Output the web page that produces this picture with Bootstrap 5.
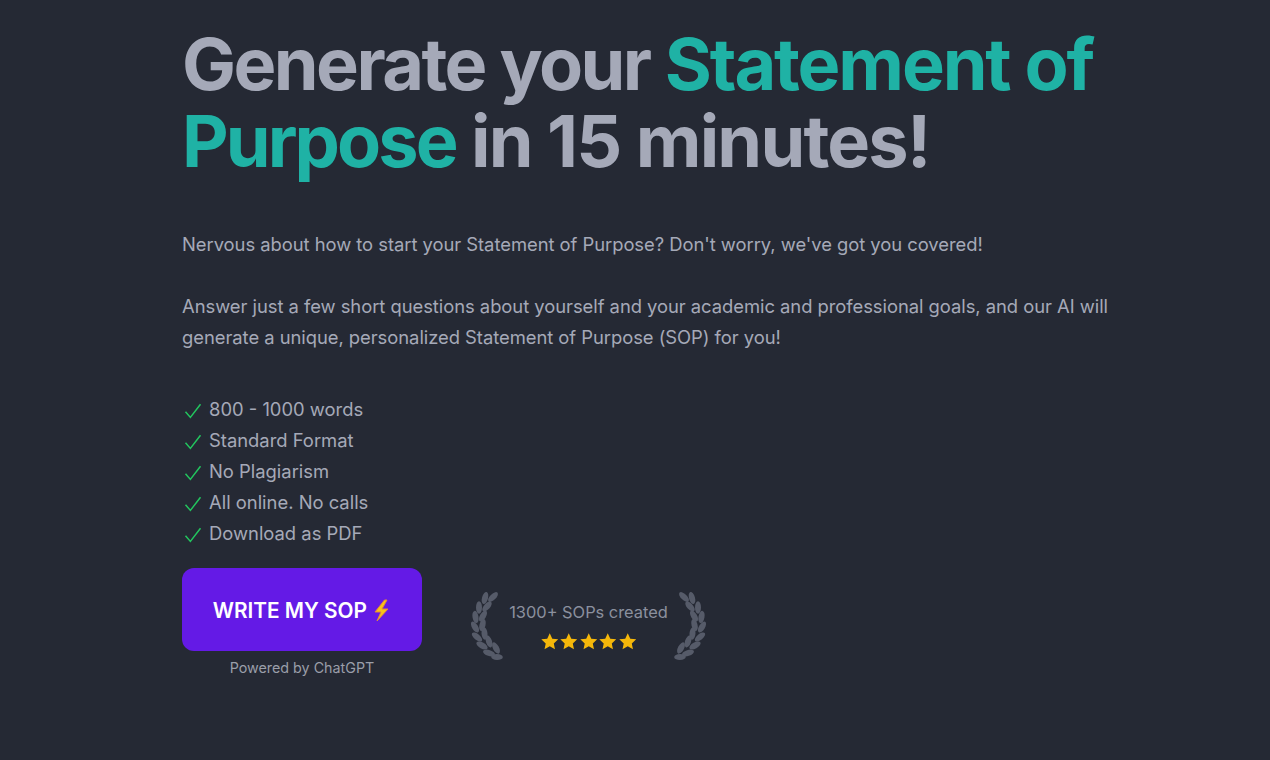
<!DOCTYPE html>
<html lang="en">
<head>
  <meta charset="UTF-8">
  <meta name="viewport" content="width=device-width, initial-scale=1.0">
  <link rel="stylesheet" href="https://cdn.jsdelivr.net/npm/bootstrap@5.3.0/dist/css/bootstrap.min.css">
  <script src="https://cdn.jsdelivr.net/npm/bootstrap@5.3.0/dist/js/bootstrap.bundle.min.js" defer></script>
  <title>Statement of Purpose</title>
  <style>
    body { background: #252934; color: #a5a9b8; font-family: Inter, sans-serif; overflow: hidden; }
    .hero-wrap { width: 960px; margin-left: 182px; padding-top: 25px; }
    .hero-title { font-size: 72px; font-weight: 700; line-height: 77px; letter-spacing: -1.8px; margin-bottom: 50px; color: #a5a9b8; }
    .accent { color: #1fb2a5; }
    .tight-a { letter-spacing: -2.55px; }
    .tight-b { letter-spacing: -2.15px; }
    .tight-c { letter-spacing: -2.9px; }
    .intro { font-size: 18.4px; line-height: 31px; width: 950px; margin: 0 0 31px; letter-spacing: -0.04px; }
    .intro-last { margin-bottom: 41px; }
    .ticks { font-size: 18.4px; line-height: 31px; margin: 0 0 19px; padding: 0; list-style: none; }
    .ticks svg { width: 18px; height: 18px; margin: 0 7px 0 2px; color: #22c55e; }
    .write-btn { width: 240px; height: 83px; background: #641ae6; border: 0; border-radius: 12px; color: #fff; font-size: 20.8px; font-weight: 600; white-space: nowrap; padding: 2px 0 0 0; }
    .write-btn:hover { background: #641ae6; color: #fff; }
    .write-btn svg { width: 19px; height: 23px; vertical-align: -4px; }
    .powered { font-size: 14.3px; line-height: 20px; margin-top: 7px; width: 240px; text-align: center; color: #9a9ea9; }
    .proof { margin-left: 49px; height: 70px; margin-top: 23px; color: #8b909e; }
    .laurel { width: 32px; height: 70px; color: #565b69; flex: none; }
    .flip-x { transform: scaleX(-1); }
    .proof-text { font-size: 16.4px; line-height: 24px; width: 171px; margin-top: -1px; }
    .stars { color: #f5b70a; height: 20px; margin-top: 8px; }
    .stars svg { width: 19.5px; height: 19px; display: block; }
  </style>
</head>
<body>
<svg width="0" height="0" class="d-block">
  <defs>
    <symbol id="laurelLeft" viewBox="0 0 32 70">
      <g fill="currentColor">
        <ellipse cx="22" cy="6" rx="3" ry="6.200" transform="rotate(45 22 6)"/>
        <ellipse cx="14" cy="7" rx="3" ry="6.200" transform="rotate(15 14 7)"/>
        <ellipse cx="16" cy="15.500" rx="3" ry="6.200" transform="rotate(42 16 15.500)"/>
        <ellipse cx="8" cy="16.500" rx="3" ry="6.200"/>
        <ellipse cx="12" cy="25" rx="3" ry="6.200" transform="rotate(30 12 25)"/>
        <ellipse cx="4.500" cy="26" rx="3" ry="6.200" transform="rotate(-10 4.500 26)"/>
        <ellipse cx="11.500" cy="34" rx="3" ry="6.200" transform="rotate(14 11.500 34)"/>
        <ellipse cx="4" cy="36" rx="3" ry="6.200" transform="rotate(-30 4 36)"/>
        <ellipse cx="13.500" cy="42.500" rx="3" ry="6.200" transform="rotate(-5 13.500 42.500)"/>
        <ellipse cx="6" cy="46" rx="3" ry="6.200" transform="rotate(-50 6 46)"/>
        <ellipse cx="18" cy="50.500" rx="3" ry="6.200" transform="rotate(-18 18 50.500)"/>
        <ellipse cx="11" cy="54.500" rx="3" ry="6.200" transform="rotate(-62 11 54.500)"/>
        <ellipse cx="25" cy="57" rx="3" ry="6.200" transform="rotate(-28 25 57)"/>
        <ellipse cx="18" cy="62" rx="3" ry="6.200" transform="rotate(-72 18 62)"/>
        <ellipse cx="26" cy="66" rx="3" ry="5.800" transform="rotate(-88 26 66)"/>
      </g>
    </symbol>
    <symbol id="star" viewBox="0 0 24 24">
      <path fill="currentColor" d="M12 1.500l3.200 6.900 7.500.9-5.600 5.100 1.500 7.500-6.600-3.800-6.600 3.800 1.500-7.500L1.300 9.300l7.500-.9z"/>
    </symbol>
    <symbol id="tick" viewBox="0 0 24 24">
      <path fill="none" stroke="currentColor" stroke-width="2" d="M2 13l6.500 7.500L22 3"/>
    </symbol>
  </defs>
</svg>

<div class="hero-wrap">
  <h1 class="hero-title"><span class="tight-a">Generate your</span> <span class="accent tight-b">Statement of</span> <span class="accent tight-c">Purpose</span> in 15 minutes!</h1>
  <p class="intro">Nervous about how to start your Statement of Purpose? Don't worry, we've got you covered!</p>
  <p class="intro intro-last">Answer just a few short questions about yourself and your academic and professional goals, and our AI will generate a unique, personalized Statement of Purpose (SOP) for you!</p>

  <ul class="ticks">
    <li><svg><use href="#tick"/></svg>800 - 1000 words</li>
    <li><svg><use href="#tick"/></svg>Standard Format</li>
    <li><svg><use href="#tick"/></svg>No Plagiarism</li>
    <li><svg><use href="#tick"/></svg>All online. No calls</li>
    <li><svg><use href="#tick"/></svg>Download as PDF</li>
  </ul>

  <div class="d-flex align-items-start">
    <div>
      <button class="btn write-btn" type="button">WRITE MY SOP
        <svg viewBox="0 0 19 23"><path fill="#f9c21a" stroke="#e08a3c" stroke-width="1" d="M12.500 1L3 13h6L5 22l11-12h-6l5-9z"/></svg>
      </button>
      <div class="powered">Powered by ChatGPT</div>
    </div>
    <div class="proof d-flex align-items-center">
      <svg class="laurel"><use href="#laurelLeft"/></svg>
      <div class="proof-text text-center">
        <div>1300+ SOPs created</div>
        <div class="stars d-flex justify-content-center">
          <svg><use href="#star"/></svg><svg><use href="#star"/></svg><svg><use href="#star"/></svg><svg><use href="#star"/></svg><svg><use href="#star"/></svg>
        </div>
      </div>
      <svg class="laurel flip-x"><use href="#laurelLeft"/></svg>
    </div>
  </div>
</div>
</body>
</html>
